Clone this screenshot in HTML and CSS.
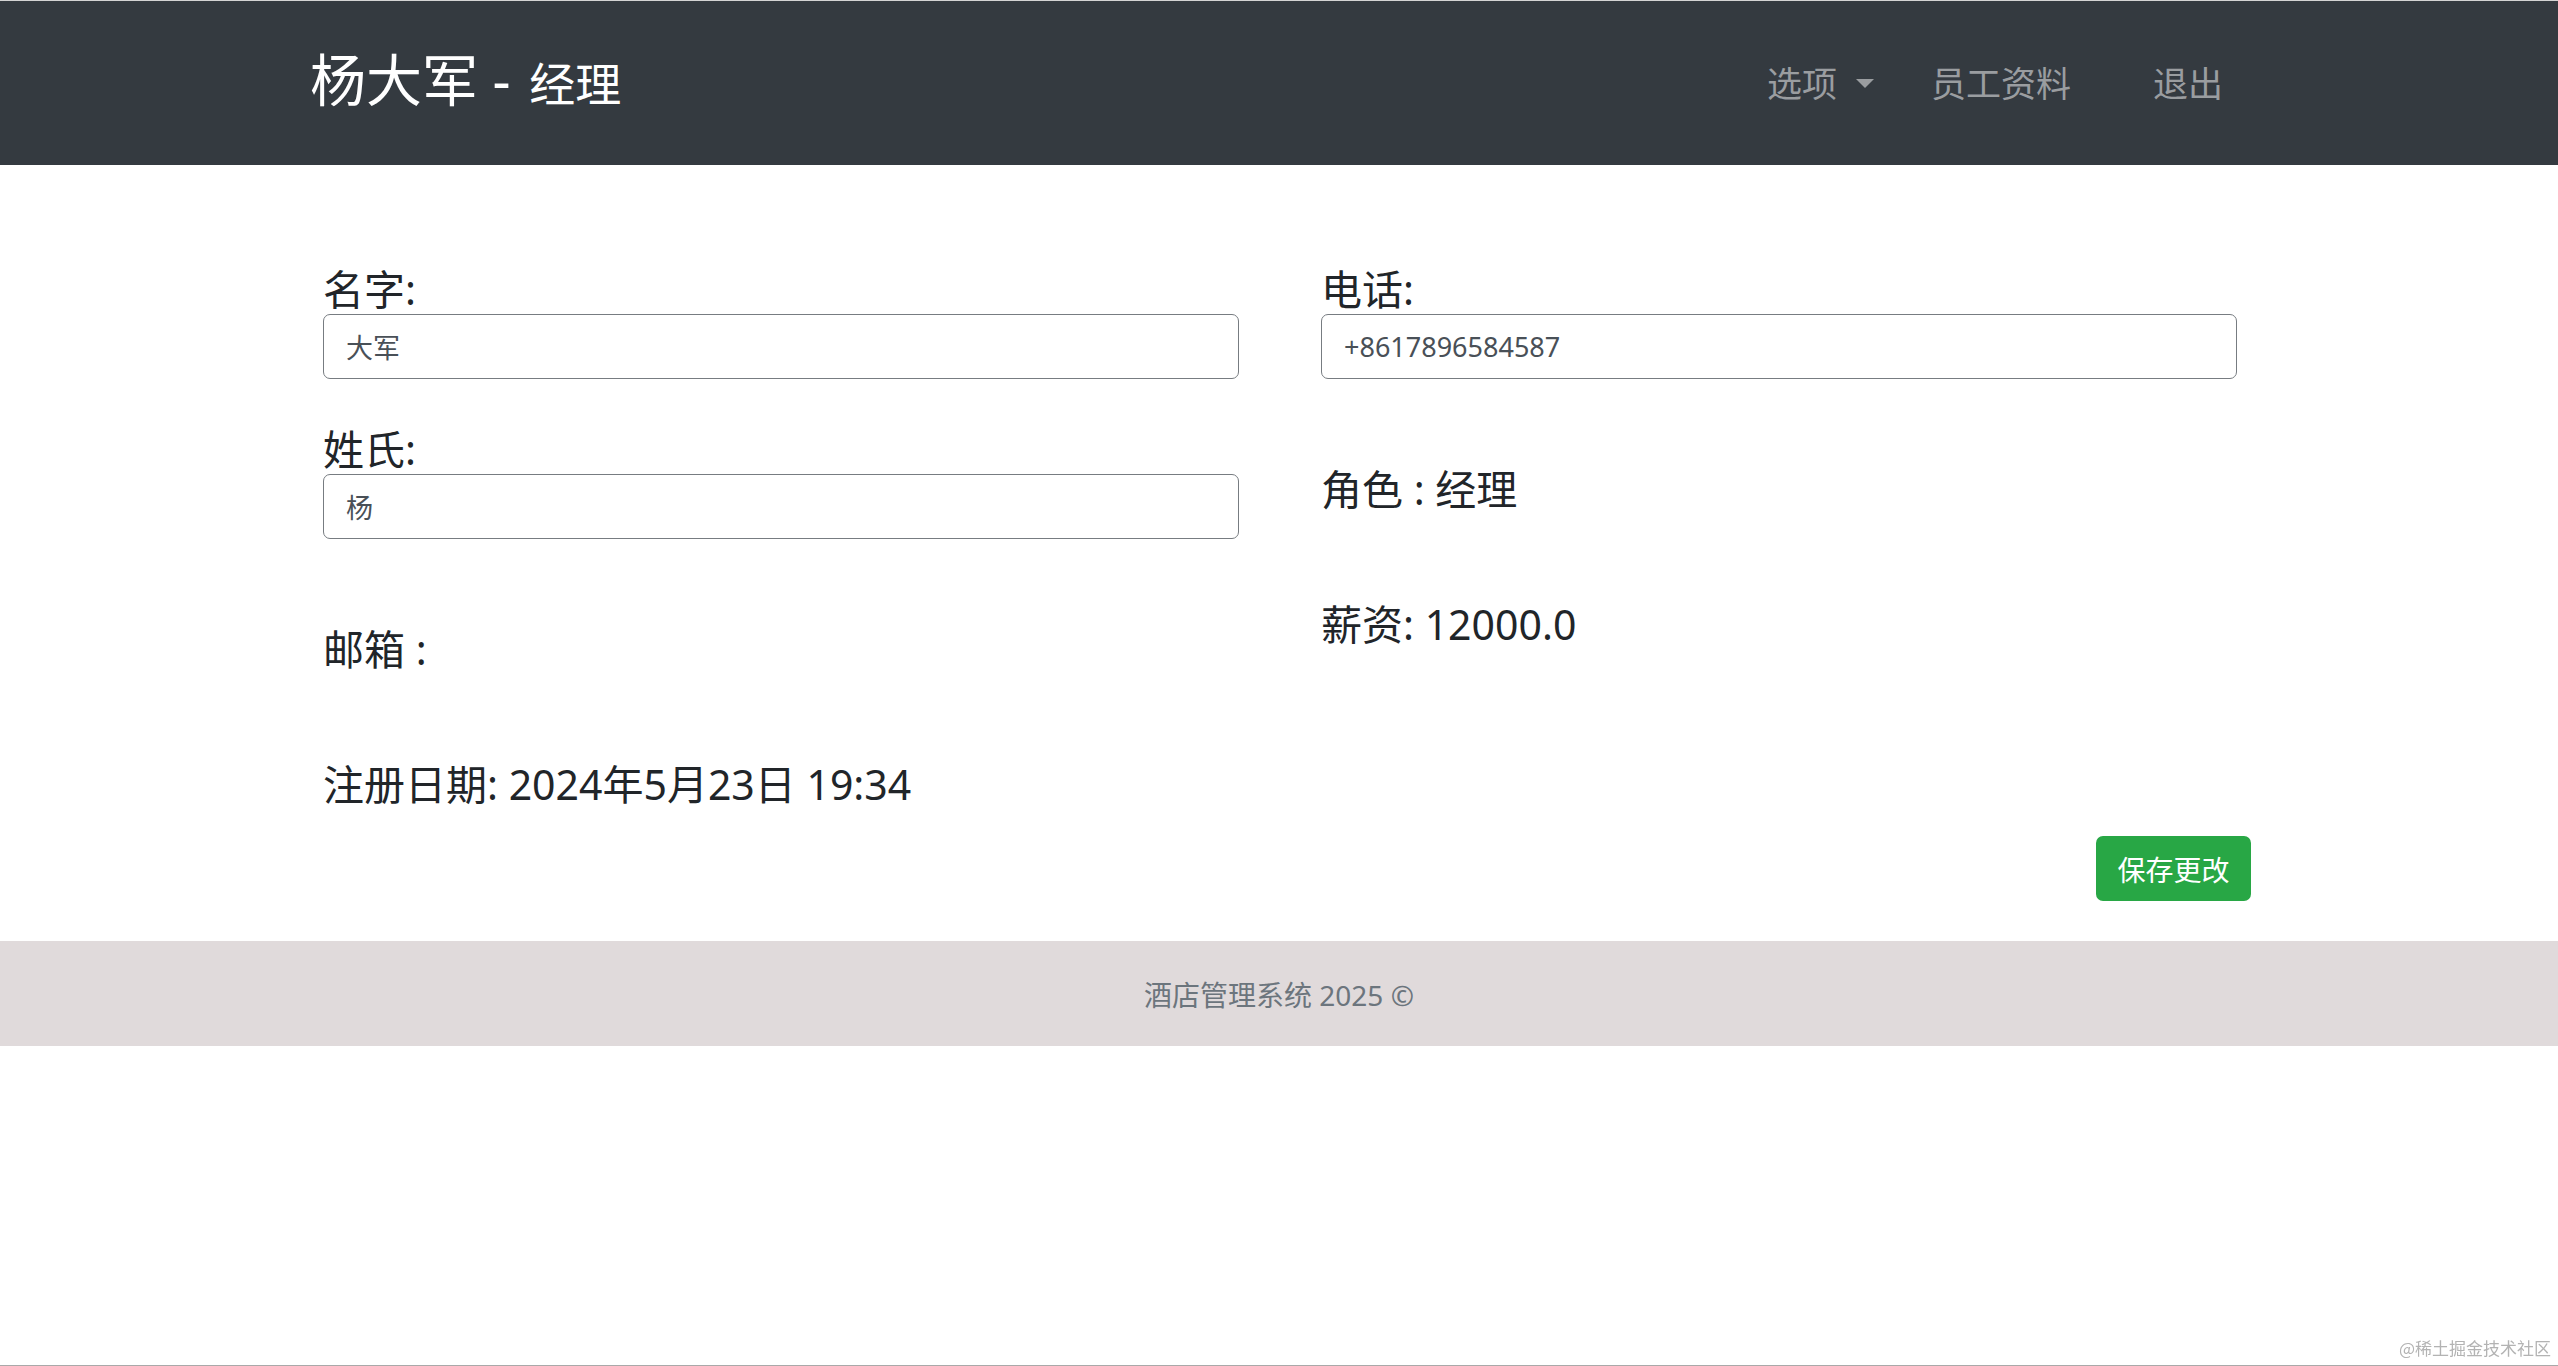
FILE: index.html
```html
<!DOCTYPE html>
<html lang="zh-CN">
<head>
<meta charset="utf-8">
<title>员工资料</title>
<link rel="stylesheet" href="styles.css">
</head>
<body>
<header class="navbar">
  <div class="container nav-inner">
    <a class="brand" href="#">杨大军 - <small>经理</small></a>
    <ul class="nav">
      <li class="nav-item"><a class="nav-link dropdown" href="#">选项<span class="caret"></span></a></li>
      <li class="nav-item"><a class="nav-link" href="#">员工资料</a></li>
      <li class="nav-item logout"><a class="nav-link" href="#">退出</a></li>
    </ul>
  </div>
</header>

<main class="container main">
  <form class="profile-form">
    <div class="form-grid">
      <div class="col">
        <div class="group">
          <label for="firstName">名字:</label>
          <input id="firstName" type="text" value="大军">
        </div>
        <div class="group group-next">
          <label for="lastName">姓氏:</label>
          <input id="lastName" type="text" value="杨">
        </div>
        <p class="info">邮箱 :</p>
        <p class="info">注册日期: 2024年5月23日 19:34</p>
      </div>
      <div class="col">
        <div class="group">
          <label for="phone">电话:</label>
          <input id="phone" type="text" value="+8617896584587">
        </div>
        <p class="info">角色 : 经理</p>
        <p class="info">薪资: 12000.0</p>
      </div>
    </div>
    <div class="actions">
      <button type="button" class="btn-save">保存更改</button>
    </div>
  </form>
</main>

<footer class="footer">
  <p>酒店管理系统 2025 ©</p>
</footer>

<div class="watermark">@稀土掘金技术社区</div>
<div class="page-edge"></div>
</body>
</html>
```

FILE: styles.css
```css
* {
  box-sizing: border-box;
}

html, body {
  margin: 0;
  padding: 0;
}

body {
  font-family: "Noto Sans", "Noto Sans CJK SC", sans-serif;
  color: #212529;
  background: #ffffff;
}

.container {
  width: 1942px;
  margin: 0 auto;
}

/* ---------- navbar ---------- */
.navbar {
  background: #343a40;
  height: 165px;
  border-top: 1px solid #d4d4d4;
}

.nav-inner {
  height: 100%;
  display: flex;
  align-items: center;
  justify-content: space-between;
}

.brand {
  font-size: 56px;
  line-height: 66px;
  color: #ffffff;
  text-decoration: none;
  margin-left: 2px;
  margin-bottom: 4px;
  white-space: nowrap;
}

.brand small {
  font-size: 46px;
  margin-left: 4px;
}

.nav {
  display: flex;
  list-style: none;
  margin: 0;
  padding: 0;
}

.nav-link {
  display: flex;
  align-items: center;
  padding: 0 27px;
  font-size: 35px;
  line-height: 51px;
  color: #9a9da0;
  text-decoration: none;
}

.nav-link.dropdown {
  margin-right: 3px;
}

.caret {
  display: inline-block;
  width: 0;
  height: 0;
  margin-left: 19px;
  border-top: 9px solid #9a9da0;
  border-left: 9px solid transparent;
  border-right: 9px solid transparent;
}

.logout {
  margin-left: 28px;
}

/* ---------- main ---------- */
.main {
  padding-top: 100px;
  padding-bottom: 40px;
}

.form-grid {
  display: grid;
  grid-template-columns: 916px 916px;
  column-gap: 82px;
  padding-left: 15px;
  align-items: start;
}

.col {
  display: flex;
  flex-direction: column;
}

.group label {
  display: block;
  font-size: 41px;
  line-height: 49px;
}

.group input {
  display: block;
  width: 100%;
  height: 65px;
  padding: 0 22px;
  border: 1.5px solid #777c81;
  border-radius: 7px;
  font-family: inherit;
  font-size: 27px;
  color: #495057;
  background: #ffffff;
}

.group-next {
  margin-top: 46px;
}

.info {
  margin: 86px 0 0;
  font-size: 41px;
  line-height: 49px;
}

.actions {
  display: flex;
  justify-content: flex-end;
  margin-top: 27px;
  margin-right: -1px;
}

.btn-save {
  width: 155px;
  height: 65px;
  border: none;
  border-radius: 7px;
  background: #28a745;
  color: #ffffff;
  font-family: inherit;
  font-size: 28px;
  padding: 0;
}

/* ---------- footer ---------- */
.footer {
  height: 105px;
  background: #e0dadb;
  display: flex;
  align-items: center;
  justify-content: center;
}

.footer p {
  margin: 0;
  font-size: 28px;
  color: #6c757d;
}

/* ---------- overlays ---------- */
.watermark {
  position: fixed;
  right: 7px;
  bottom: 6px;
  font-size: 17px;
  color: #b3b3b3;
  font-family: "Noto Sans CJK SC", serif;
}

.page-edge {
  position: fixed;
  left: 0;
  right: 0;
  bottom: 0;
  height: 1px;
  background: #a9a9a9;
}
```
